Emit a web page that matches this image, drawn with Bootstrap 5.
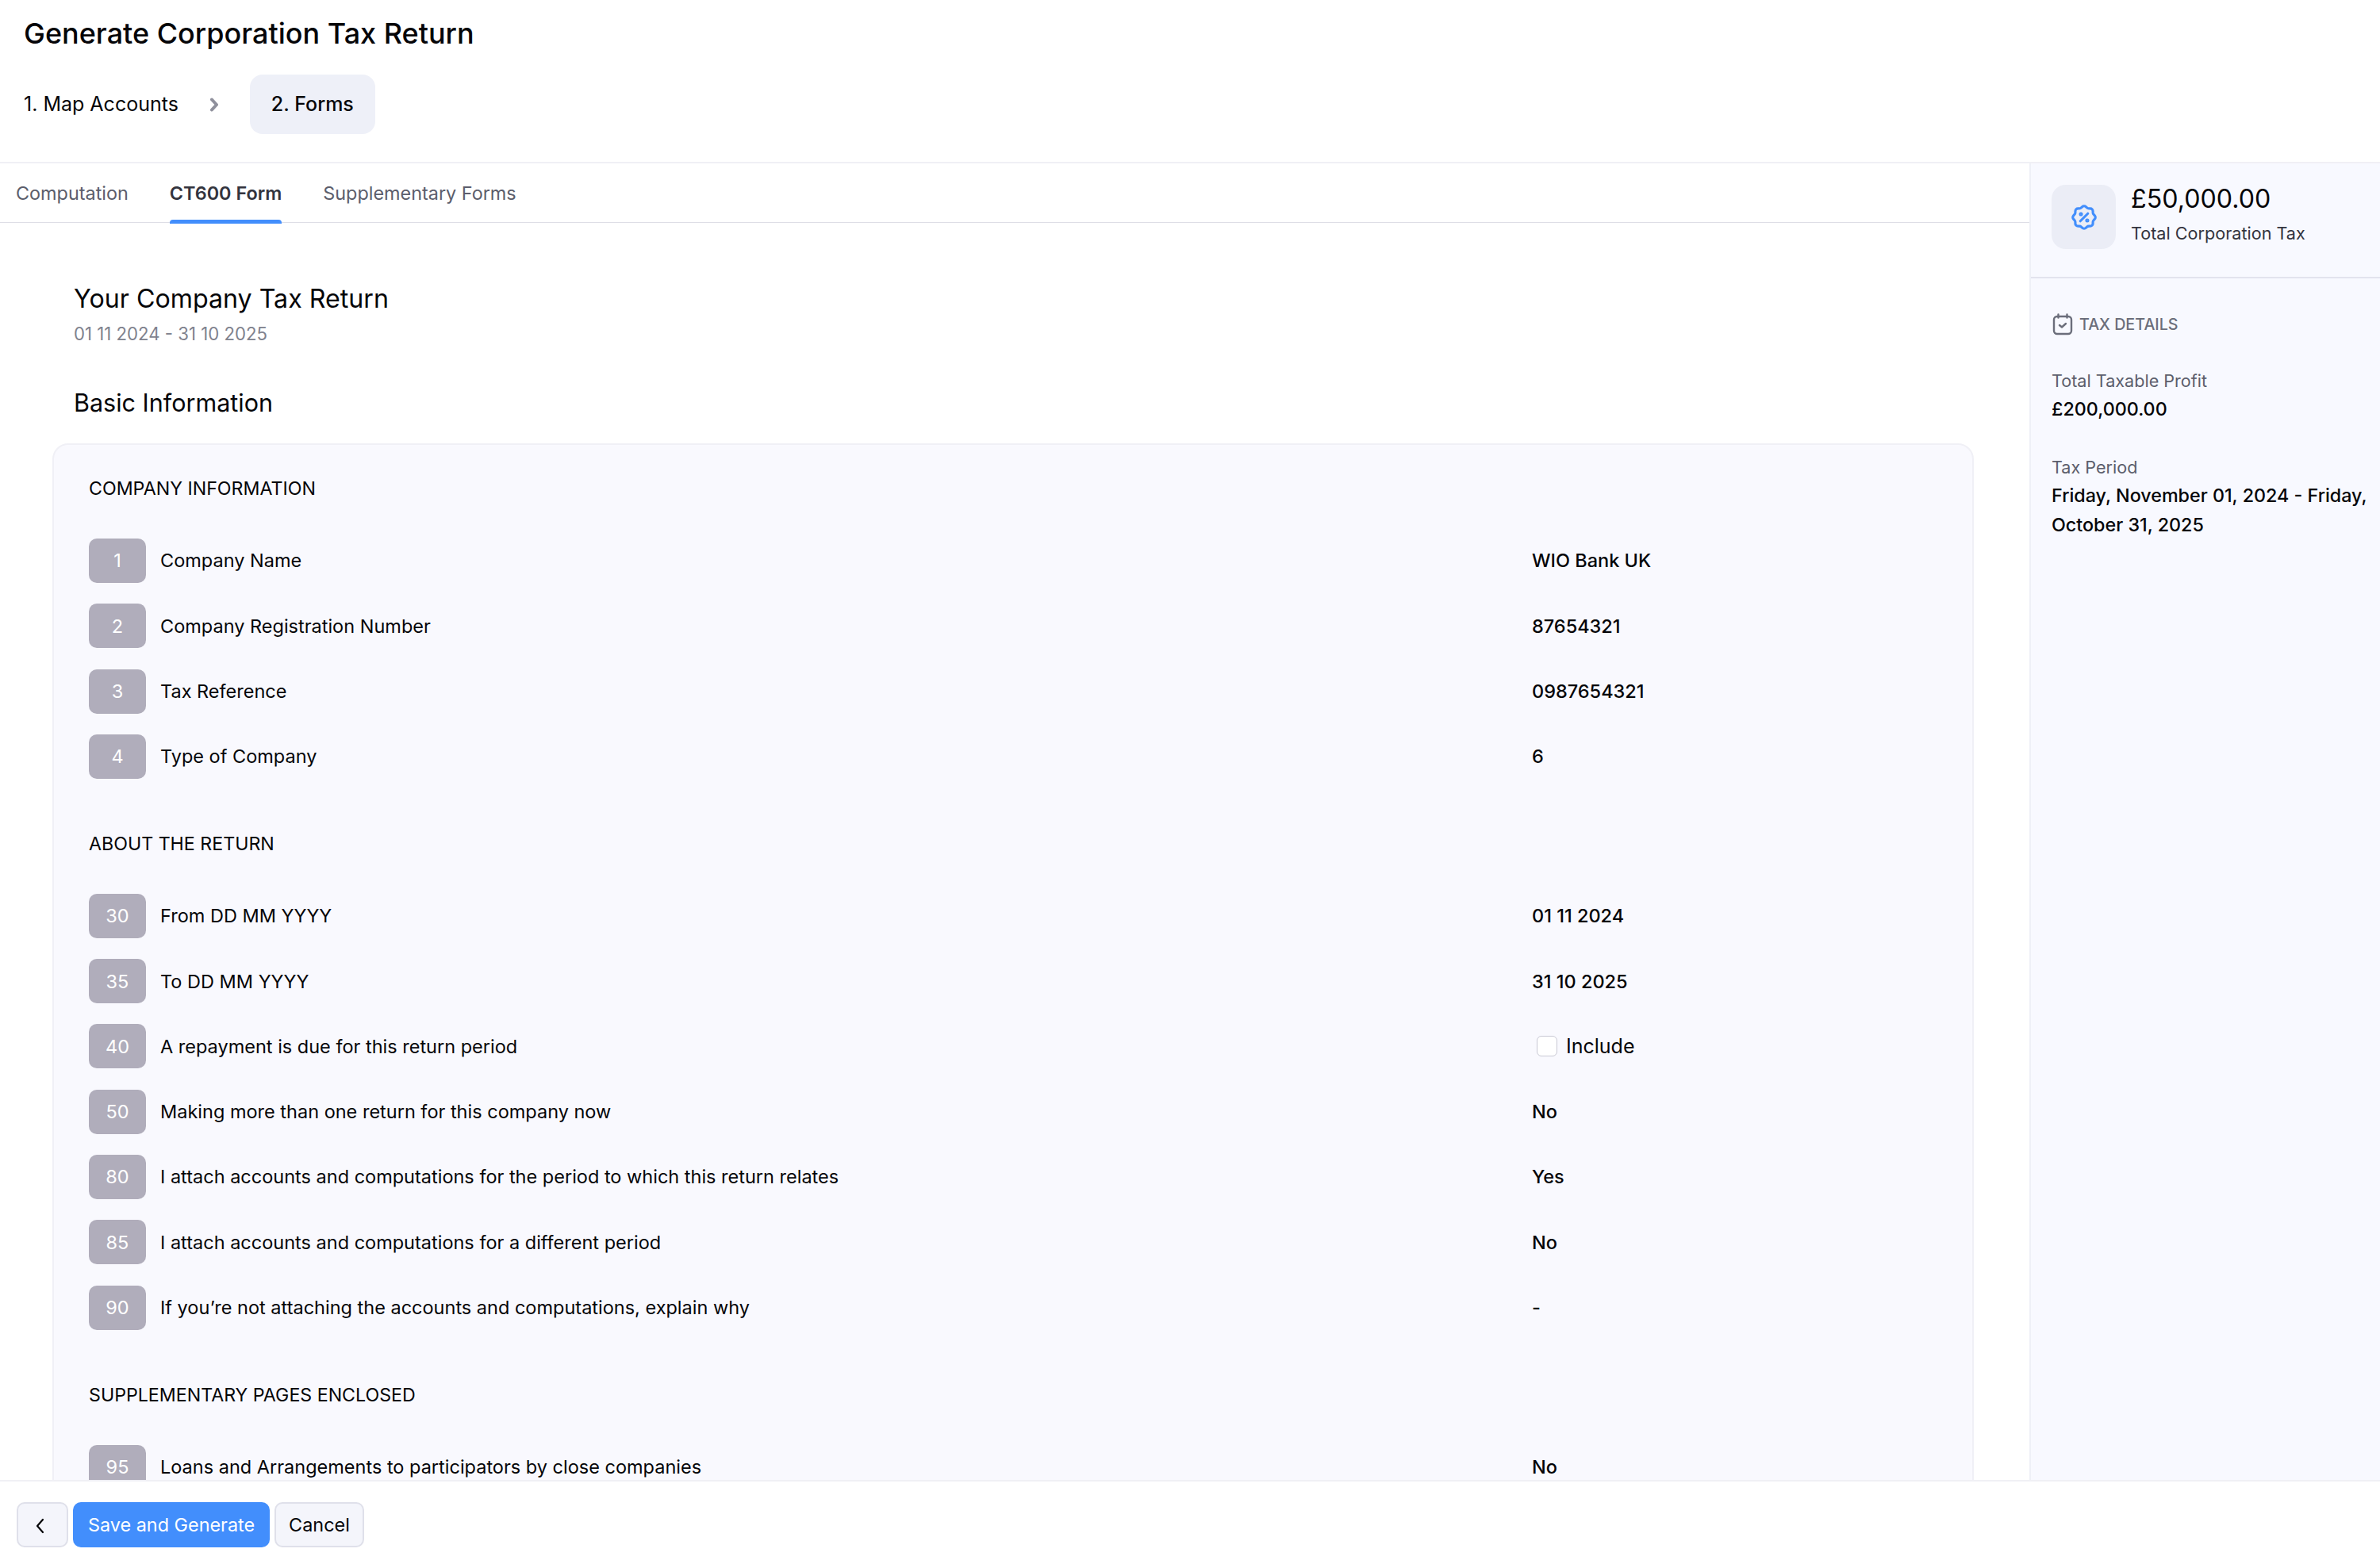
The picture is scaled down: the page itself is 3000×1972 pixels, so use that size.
<!DOCTYPE html>
<html lang="en">
<head>
    <meta charset="UTF-8">
    <meta name="viewport" content="width=device-width, initial-scale=1.0">
    <title>Generate Corporation Tax Return</title>
    <link href="https://cdn.jsdelivr.net/npm/bootstrap@5.3.0/dist/css/bootstrap.min.css" rel="stylesheet">
    <style>
        body { font-family: Inter, "Liberation Sans", sans-serif; font-size: 23.5px; color: #050508; background: #fff; }
        .page-head { height: 206px; padding: 20px 30px 0; border-bottom: 2px solid #f0f0f5; flex: none; }
        .page-title { font-size: 36px; line-height: 44px; font-weight: 500; margin: 0 0 30px; }
        .step-text { font-size: 25px; line-height: 75px; }
        .step-active { background: #eef0f8; border-radius: 16px; padding: 0 27px; font-weight: 500; margin-left: 39px; }
        .step-arrow { margin-left: 39px; }
        .tab-bar { height: 75px; border-bottom: 1px solid #dedee6; padding-left: 20px; gap: 52px; }
        .tab-item { font-size: 23.4px; line-height: 75px; height: 75px; color: #5c5e6c; position: relative; }
        .tab-on { font-weight: 600; color: #33343e; }
        .tab-on::after { content: ""; position: absolute; left: 0; right: 0; bottom: -1px; height: 5px; background: #428efc; border-radius: 4px 4px 0 0; }
        .form-pane { padding: 72px 70px 0 66px; }
        .ret-title { font-size: 32.2px; line-height: 48px; font-weight: 400; margin: 0 0 0 27px; }
        .ret-dates { font-size: 22.2px; line-height: 34px; color: #80828e; margin: 3px 0 0 27px; }
        .ret-sub { font-size: 30.5px; line-height: 44px; font-weight: 400; margin: 48px 0 29px 27px; }
        .form-box { background: #f9f9fe; border: 2px solid #f0f0f6; border-radius: 20px; padding: 37px 46px 0 44px; }
        .sec-name { font-size: 23.2px; line-height: 36px; margin: 0 0 45px; }
        .sec-gap { margin-top: 64px; }
        .line-item { height: 56px; margin-bottom: 26.3px; }
        .num-tag { width: 72px; height: 56px; border-radius: 10px; background: #b0adbb; color: #fff; margin-right: 18px; flex: none; }
        .line-val { width: 509px; flex: none; font-weight: 500; }
        .line-val .form-check-input { width: 26px; height: 26px; margin: 0 11px 0 6px; border-color: #c8c8d4; border-radius: 6px; }
        .line-val label { font-weight: 400; font-size: 25px; }
        .side-pane { width: 442px; flex: none; background: #f8f9ff; border-left: 2px solid #eef0f7; }
        .side-top { height: 145px; padding: 27px 0 0 26px; border-bottom: 2px solid #e3e4ee; gap: 19px; }
        .side-icon { width: 81px; height: 81px; border-radius: 18px; background: #ebedf6; }
        .side-amt { font-size: 32.2px; line-height: 36px; }
        .side-cap { font-size: 21.6px; line-height: 32px; color: #33343e; margin-top: 9px; }
        .side-body { padding: 40px 10px 0 26px; }
        .side-head { font-size: 19.7px; line-height: 36px; color: #6b6e7b; font-weight: 500; gap: 8px; margin-bottom: 36px; }
        .side-head svg { margin-left: 1px; }
        .side-label { font-size: 21.6px; line-height: 35px; color: #5c5e6c; }
        .side-value { font-size: 23.3px; line-height: 36.4px; font-weight: 500; margin-bottom: 38px; }
        .foot-bar { height: 106px; flex: none; padding: 26px 0 0 21px; border-top: 2px solid #f0f0f5; gap: 6px; background: #fff; }
        .foot-btn { height: 57px; font-size: 23.4px; padding: 0 16px; border-radius: 10px; line-height: 1; }
        .foot-back { width: 65px; padding: 0 5px 0 0; }
        .btn-soft { background: #f4f5fb; border: 2px solid #dfe0ea; color: #050508; }
        .btn-main { background: #428efc; border: 0; color: #fff; padding: 0 19px; }
    </style>
</head>
<body>
<div class="vh-100 d-flex flex-column overflow-hidden">
    <div class="page-head">
        <h1 class="page-title">Generate Corporation Tax Return</h1>
        <div class="d-flex align-items-center">
            <span class="step-text">1. Map Accounts</span>
            <svg class="step-arrow" width="12" height="18" viewBox="0 0 12 18" fill="none" stroke="#8f909c" stroke-width="4" stroke-linecap="round" stroke-linejoin="round"><path d="M3 2.5l6 6.5-6 6.5"/></svg>
            <span class="step-text step-active">2. Forms</span>
        </div>
    </div>

    <div class="d-flex flex-grow-1 overflow-hidden">
        <div class="flex-grow-1 overflow-hidden">
            <div class="tab-bar d-flex">
                <div class="tab-item">Computation</div>
                <div class="tab-item tab-on">CT600 Form</div>
                <div class="tab-item">Supplementary Forms</div>
            </div>
            <div class="form-pane">
                <h2 class="ret-title">Your Company Tax Return</h2>
                <div class="ret-dates">01 11 2024 - 31 10 2025</div>
                <h3 class="ret-sub">Basic Information</h3>
                <div class="form-box">
                    <div class="sec-name">COMPANY INFORMATION</div>
                    <div class="line-item d-flex align-items-center"><span class="num-tag d-flex align-items-center justify-content-center">1</span><span class="flex-grow-1">Company Name</span><span class="line-val">WIO Bank UK</span></div>
                    <div class="line-item d-flex align-items-center"><span class="num-tag d-flex align-items-center justify-content-center">2</span><span class="flex-grow-1">Company Registration Number</span><span class="line-val">87654321</span></div>
                    <div class="line-item d-flex align-items-center"><span class="num-tag d-flex align-items-center justify-content-center">3</span><span class="flex-grow-1">Tax Reference</span><span class="line-val">0987654321</span></div>
                    <div class="line-item d-flex align-items-center"><span class="num-tag d-flex align-items-center justify-content-center">4</span><span class="flex-grow-1">Type of Company</span><span class="line-val">6</span></div>

                    <div class="sec-name sec-gap">ABOUT THE RETURN</div>
                    <div class="line-item d-flex align-items-center"><span class="num-tag d-flex align-items-center justify-content-center">30</span><span class="flex-grow-1">From DD MM YYYY</span><span class="line-val">01 11 2024</span></div>
                    <div class="line-item d-flex align-items-center"><span class="num-tag d-flex align-items-center justify-content-center">35</span><span class="flex-grow-1">To DD MM YYYY</span><span class="line-val">31 10 2025</span></div>
                    <div class="line-item d-flex align-items-center"><span class="num-tag d-flex align-items-center justify-content-center">40</span><span class="flex-grow-1">A repayment is due for this return period</span><span class="line-val d-flex align-items-center"><input class="form-check-input" type="checkbox" id="includeRepay"><label for="includeRepay">Include</label></span></div>
                    <div class="line-item d-flex align-items-center"><span class="num-tag d-flex align-items-center justify-content-center">50</span><span class="flex-grow-1">Making more than one return for this company now</span><span class="line-val">No</span></div>
                    <div class="line-item d-flex align-items-center"><span class="num-tag d-flex align-items-center justify-content-center">80</span><span class="flex-grow-1">I attach accounts and computations for the period to which this return relates</span><span class="line-val">Yes</span></div>
                    <div class="line-item d-flex align-items-center"><span class="num-tag d-flex align-items-center justify-content-center">85</span><span class="flex-grow-1">I attach accounts and computations for a different period</span><span class="line-val">No</span></div>
                    <div class="line-item d-flex align-items-center"><span class="num-tag d-flex align-items-center justify-content-center">90</span><span class="flex-grow-1">If you’re not attaching the accounts and computations, explain why</span><span class="line-val">-</span></div>

                    <div class="sec-name sec-gap">SUPPLEMENTARY PAGES ENCLOSED</div>
                    <div class="line-item d-flex align-items-center"><span class="num-tag d-flex align-items-center justify-content-center">95</span><span class="flex-grow-1">Loans and Arrangements to participators by close companies</span><span class="line-val">No</span></div>
                </div>
            </div>
        </div>

        <div class="side-pane">
            <div class="side-top d-flex">
                <div class="side-icon d-flex align-items-center justify-content-center">
                    <svg width="38" height="38" viewBox="0 0 24 24" fill="none" stroke="#428efc" stroke-width="2" stroke-linecap="round" stroke-linejoin="round"><path d="M9 15l6-6"/><circle cx="9.5" cy="9.5" r=".6" fill="#428efc"/><circle cx="14.5" cy="14.5" r=".6" fill="#428efc"/><path d="M5 7.2a2.2 2.2 0 0 1 2.2-2.2h1a2.2 2.2 0 0 0 1.55-.64l.7-.7a2.2 2.2 0 0 1 3.12 0l.7.7c.41.41.97.64 1.55.64h1a2.2 2.2 0 0 1 2.2 2.2v1c0 .58.23 1.14.64 1.55l.7.7a2.2 2.2 0 0 1 0 3.12l-.7.7a2.2 2.2 0 0 0-.64 1.55v1a2.2 2.2 0 0 1-2.2 2.2h-1a2.2 2.2 0 0 0-1.55.64l-.7.7a2.2 2.2 0 0 1-3.12 0l-.7-.7a2.2 2.2 0 0 0-1.55-.64h-1a2.2 2.2 0 0 1-2.2-2.2v-1a2.2 2.2 0 0 0-.64-1.55l-.7-.7a2.2 2.2 0 0 1 0-3.12l.7-.7a2.2 2.2 0 0 0 .64-1.55z"/></svg>
                </div>
                <div>
                    <div class="side-amt">£50,000.00</div>
                    <div class="side-cap">Total Corporation Tax</div>
                </div>
            </div>
            <div class="side-body">
                <div class="side-head d-flex align-items-center">
                    <svg width="26" height="28" viewBox="0 0 26 28" fill="none" stroke="#6b6e7b" stroke-width="2.4" stroke-linecap="round" stroke-linejoin="round"><rect x="2" y="4" width="22" height="22" rx="4"/><path d="M7.5 1.5v4M18.5 1.5v4M9 15l3 2.5 5-4.5"/></svg>
                    <span>TAX DETAILS</span>
                </div>
                <div class="side-label">Total Taxable Profit</div>
                <div class="side-value">£200,000.00</div>
                <div class="side-label">Tax Period</div>
                <div class="side-value">Friday, November 01, 2024 - Friday, October 31, 2025</div>
            </div>
        </div>
    </div>

    <div class="foot-bar d-flex align-items-start">
        <button class="btn foot-btn foot-back btn-soft" type="button" aria-label="Back">
            <svg width="14" height="22" viewBox="0 0 14 22" fill="none" stroke="#050508" stroke-width="2.2" stroke-linecap="round" stroke-linejoin="round"><path d="M10 3l-7 8 7 8"/></svg>
        </button>
        <button class="btn foot-btn btn-main" type="button">Save and Generate</button>
        <button class="btn foot-btn btn-soft" type="button">Cancel</button>
    </div>
</div>
</body>
</html>
